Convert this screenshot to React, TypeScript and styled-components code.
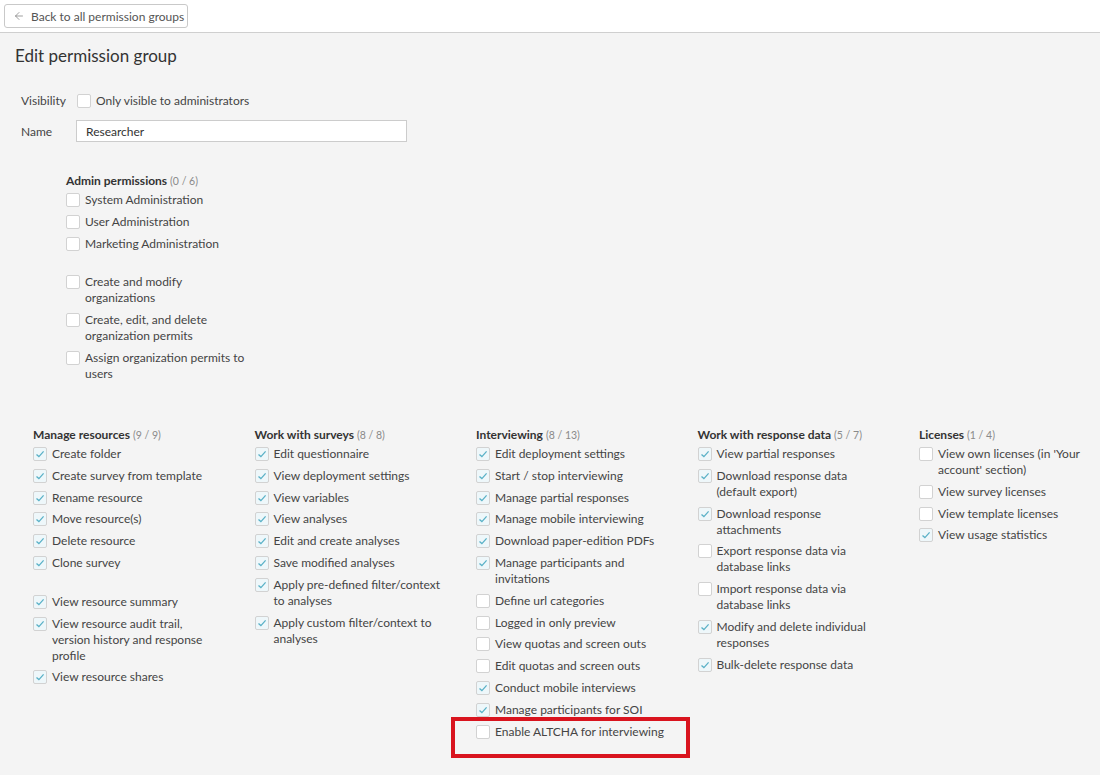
import React from 'react'
import styled, { createGlobalStyle } from 'styled-components'
import { ArrowLeft } from 'lucide-react'

const GlobalStyle = createGlobalStyle`
  html, body {
    margin: 0;
    padding: 0;
    background: #f4f4f4;
  }
  body {
    font-family: Lato, "Open Sans", "Liberation Sans", sans-serif;
    font-size: 12px;
    color: #444;
  }
  * { box-sizing: border-box; }
`

// labels carry the same line breaks as the original screen
type Perm = { label: string; checked?: boolean; spacer?: boolean; highlight?: boolean }
type Group = { title: string; perms: Perm[] }

const adminPerms: Perm[] = [
  { label: 'System Administration' },
  { label: 'User Administration' },
  { label: 'Marketing Administration' },
  { label: 'Create and modify\norganizations', spacer: true },
  { label: 'Create, edit, and delete\norganization permits' },
  { label: 'Assign organization permits to\nusers' },
]

const groups: Group[] = [
  {
    title: 'Manage resources',
    perms: [
      { label: 'Create folder', checked: true },
      { label: 'Create survey from template', checked: true },
      { label: 'Rename resource', checked: true },
      { label: 'Move resource(s)', checked: true },
      { label: 'Delete resource', checked: true },
      { label: 'Clone survey', checked: true },
      { label: 'View resource summary', checked: true, spacer: true },
      { label: 'View resource audit trail,\nversion history and response\nprofile', checked: true },
      { label: 'View resource shares', checked: true },
    ],
  },
  {
    title: 'Work with surveys',
    perms: [
      { label: 'Edit questionnaire', checked: true },
      { label: 'View deployment settings', checked: true },
      { label: 'View variables', checked: true },
      { label: 'View analyses', checked: true },
      { label: 'Edit and create analyses', checked: true },
      { label: 'Save modified analyses', checked: true },
      { label: 'Apply pre-defined filter/context\nto analyses', checked: true },
      { label: 'Apply custom filter/context to\nanalyses', checked: true },
    ],
  },
  {
    title: 'Interviewing',
    perms: [
      { label: 'Edit deployment settings', checked: true },
      { label: 'Start / stop interviewing', checked: true },
      { label: 'Manage partial responses', checked: true },
      { label: 'Manage mobile interviewing', checked: true },
      { label: 'Download paper-edition PDFs', checked: true },
      { label: 'Manage participants and\ninvitations', checked: true },
      { label: 'Define url categories' },
      { label: 'Logged in only preview' },
      { label: 'View quotas and screen outs' },
      { label: 'Edit quotas and screen outs' },
      { label: 'Conduct mobile interviews', checked: true },
      { label: 'Manage participants for SOI', checked: true },
      { label: 'Enable ALTCHA for interviewing', highlight: true },
    ],
  },
  {
    title: 'Work with response data',
    perms: [
      { label: 'View partial responses', checked: true },
      { label: 'Download response data\n(default export)', checked: true },
      { label: 'Download response\nattachments', checked: true },
      { label: 'Export response data via\ndatabase links' },
      { label: 'Import response data via\ndatabase links' },
      { label: 'Modify and delete individual\nresponses', checked: true },
      { label: 'Bulk-delete response data', checked: true },
    ],
  },
  {
    title: 'Licenses',
    perms: [
      { label: "View own licenses (in 'Your\naccount' section)" },
      { label: 'View survey licenses' },
      { label: 'View template licenses' },
      { label: 'View usage statistics', checked: true },
    ],
  },
]

const TopBar = styled.div`
  height: 33px;
  background: #fff;
  border-bottom: 1px solid #cfcfcf;
  padding: 4px 0 0 4px;
`

const BackButton = styled.button`
  display: flex;
  align-items: center;
  gap: 6px;
  height: 24px;
  width: 184px;
  padding: 0 0 0 8px;
  background: #fff;
  border: 1px solid #c9c9c9;
  border-radius: 3px;
  font: inherit;
  font-size: 12px;
  color: #555;
  cursor: pointer;
`

const Main = styled.main`
  padding: 12px 0 40px 15px;
`

const Title = styled.h1`
  margin: 0 0 23px;
  font-size: 17px;
  line-height: 22px;
  font-weight: 400;
  color: #333;
`

const FormRow = styled.div<{ $gap?: number }>`
  display: flex;
  align-items: center;
  padding-left: 6px;
  min-height: 20px;
  margin-bottom: ${p => p.$gap ?? 0}px;
`

const FieldLabel = styled.span`
  width: 55px;
  flex: none;
  color: #444;
`

const InlineCheck = styled.label`
  display: flex;
  align-items: center;
  gap: 5px;
  margin-left: 1px;
`

const NameInput = styled.input`
  width: 331px;
  height: 22px;
  border: 1px solid #ccc;
  background: #fff;
  padding: 0 9px;
  font: inherit;
  font-size: 12px;
  color: #333;
  outline: none;
`

const AdminBlock = styled.section`
  margin: 31px 0 0 51px;
`

const Columns = styled.div`
  display: grid;
  grid-template-columns: repeat(4, 221.5px) 1fr;
  margin: 45px 0 0 18px;
  align-items: start;
`

const GroupBox = styled.section`
  display: flex;
  flex-direction: column;
`

const GroupTitle = styled.div`
  font-weight: 700;
  color: #333;
  font-size: 12px;
  line-height: 16px;
  margin-bottom: 3px;
`

const Count = styled.span`
  font-weight: 400;
  font-size: 10.5px;
  color: #8a8a8a;
`

const List = styled.div`
  display: flex;
  flex-direction: column;
  gap: 5.8px;
`

const Item = styled.label<{ $spacer?: boolean }>`
  position: relative;
  display: flex;
  align-items: flex-start;
  gap: 5px;
  line-height: 16px;
  margin-top: ${p => (p.$spacer ? 17 : 0)}px;
`

const Box = styled.span<{ $checked?: boolean }>`
  flex: none;
  width: 14px;
  height: 14px;
  margin-top: 1px;
  border: 1px solid #d2d2d2;
  border-radius: 2px;
  background: ${p => (p.$checked ? '#eef7fa' : '#fff')};
  display: flex;
  align-items: center;
  justify-content: center;
`

const ItemText = styled.span`
  white-space: pre;
  color: #444;
`

const Highlight = styled.span`
  position: absolute;
  left: -25px;
  top: -7px;
  width: 239px;
  height: 41px;
  border: 4px solid #d9141e;
  pointer-events: none;
`

const Check: React.FC<{ checked?: boolean }> = ({ checked }) => (
  <Box $checked={checked}>
    {checked && (
      <svg width="12" height="12" viewBox="0 0 12 12">
        <path d="M2.5 6.4 L4.9 8.6 L9.6 3.4" fill="none" stroke="#5ab1c7" strokeWidth="1.3" />
      </svg>
    )}
  </Box>
)

const PermList: React.FC<{ perms: Perm[] }> = ({ perms }) => (
  <List>
    {perms.map(p => (
      <Item key={p.label} $spacer={p.spacer}>
        <Check checked={p.checked} />
        <ItemText>{p.label}</ItemText>
        {p.highlight && <Highlight />}
      </Item>
    ))}
  </List>
)

const App: React.FC = () => {
  return (
    <>
      <GlobalStyle />
      <TopBar>
        <BackButton>
          <ArrowLeft size={12} strokeWidth={1.4} color="#777" />
          Back to all permission groups
        </BackButton>
      </TopBar>
      <Main>
        <Title>Edit permission group</Title>
        <FormRow $gap={10}>
          <FieldLabel>Visibility</FieldLabel>
          <InlineCheck>
            <Check />
            Only visible to administrators
          </InlineCheck>
        </FormRow>
        <FormRow>
          <FieldLabel>Name</FieldLabel>
          <NameInput defaultValue="Researcher" />
        </FormRow>

        <AdminBlock>
          <GroupTitle>
            Admin permissions <Count>(0 / 6)</Count>
          </GroupTitle>
          <PermList perms={adminPerms} />
        </AdminBlock>

        <Columns>
          {groups.map(g => {
            const on = g.perms.filter(p => p.checked).length
            return (
              <GroupBox key={g.title}>
                <GroupTitle>
                  {g.title} <Count>({on} / {g.perms.length})</Count>
                </GroupTitle>
                <PermList perms={g.perms} />
              </GroupBox>
            )
          })}
        </Columns>
      </Main>
    </>
  )
}

export default App
